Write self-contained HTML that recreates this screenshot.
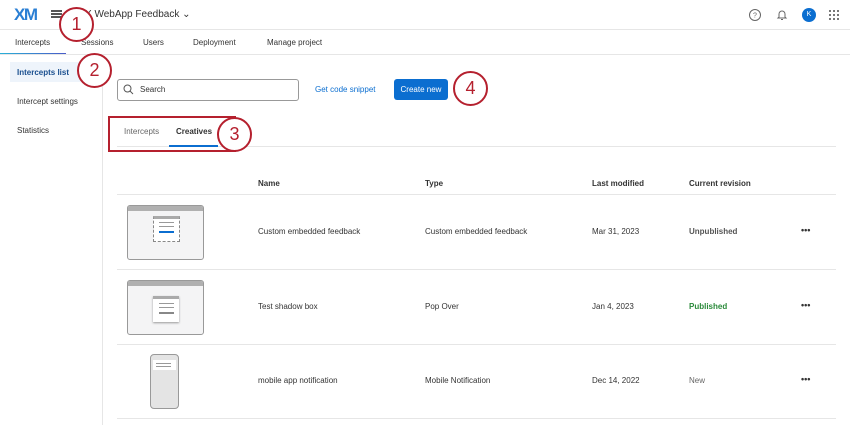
<!DOCTYPE html>
<html><head><style>
*{margin:0;padding:0;box-sizing:border-box}
body{width:850px;height:425px;overflow:hidden;background:#fff;font-family:"Liberation Sans",Arial,sans-serif;color:#333;position:relative;font-size:8px}
.a{position:absolute}
.circ{position:absolute;width:35px;height:35px;border:2.5px solid #b5202e;border-radius:50%;background:#fff;color:#b5202e;font-size:18px;text-align:center;line-height:30px}
.thumb{position:absolute;width:77px;height:55px;background:#f4f4f5;border:1px solid #999;border-radius:3px;overflow:hidden}
.thumb:before{content:"";position:absolute;left:0;top:0;right:0;height:5px;background:#b0b0b0}
.hl{position:absolute;left:117px;width:719px;height:1px;background:#e6e6e6}
.td{position:absolute;font-size:8px;color:#333}
</style></head><body>
<div class="a" style="left:14px;top:5px;font-size:17px;font-weight:bold;color:#2a7fd4;letter-spacing:-1.5px">XM</div>
<div class="a" style="left:51px;top:10px;width:11px;height:1.5px;background:#555;box-shadow:0 3px 0 #555,0 6px 0 #555"></div>
<div class="a" style="left:85px;top:9px;font-size:10px;color:#333">X WebApp Feedback ⌄</div>
<svg class="a" style="left:748px;top:8px" width="14" height="14"><circle cx="7" cy="7" r="5.5" fill="none" stroke="#666" stroke-width="1"/><text x="7" y="9.5" font-size="7" text-anchor="middle" fill="#666" font-family="Liberation Sans">?</text></svg>
<svg class="a" style="left:776px;top:8px" width="12" height="14"><path d="M2 10 L3 9 V6 A3 3 0 0 1 9 6 V9 L10 10 Z M5 11.5 H7" fill="none" stroke="#666" stroke-width="1"/></svg>
<div class="a" style="left:802px;top:8px;width:14px;height:14px;border-radius:50%;background:#0b6ed0;color:#fff;font-size:7px;text-align:center;line-height:14px">K</div>
<svg class="a" style="left:829px;top:10px" width="11" height="11" fill="#777"><rect x="0" y="0" width="2" height="2"/><rect x="4" y="0" width="2" height="2"/><rect x="8" y="0" width="2" height="2"/><rect x="0" y="4" width="2" height="2"/><rect x="4" y="4" width="2" height="2"/><rect x="8" y="4" width="2" height="2"/><rect x="0" y="8" width="2" height="2"/><rect x="4" y="8" width="2" height="2"/><rect x="8" y="8" width="2" height="2"/></svg>
<div class="a" style="left:0;top:29px;width:850px;height:1px;background:#e6e6e6"></div>
<div class="a" style="left:15px;top:38px;font-size:8px">Intercepts</div>
<div class="a" style="left:81px;top:38px;font-size:8px">Sessions</div>
<div class="a" style="left:143px;top:38px;font-size:8px">Users</div>
<div class="a" style="left:193px;top:38px;font-size:8px">Deployment</div>
<div class="a" style="left:267px;top:38px;font-size:8px">Manage project</div>
<div class="a" style="left:0;top:53px;width:66px;height:2px;background:linear-gradient(90deg,#2ab0d8,#4a5bc8)"></div>
<div class="a" style="left:0;top:54px;width:850px;height:1px;background:#e6e6e6"></div>
<div class="a" style="left:102px;top:55px;width:1px;height:370px;background:#e6e6e6"></div>
<div class="a" style="left:10px;top:62px;width:90px;height:20px;background:#eef4fb"></div>
<div class="a" style="left:17px;top:68px;font-size:8px;font-weight:bold;color:#1a4f8f">Intercepts list</div>
<div class="a" style="left:17px;top:97px;font-size:8px">Intercept settings</div>
<div class="a" style="left:17px;top:126px;font-size:8px">Statistics</div>
<div class="a" style="left:117px;top:79px;width:182px;height:22px;border:1px solid #999;border-radius:3px"></div>
<svg class="a" style="left:123px;top:84px" width="11" height="11"><circle cx="4.5" cy="4.5" r="3.5" fill="none" stroke="#555" stroke-width="1"/><path d="M7 7 L10 10" stroke="#555"/></svg>
<div class="a" style="left:140px;top:85px;font-size:8px">Search</div>
<div class="a" style="left:315px;top:85px;font-size:8px;color:#0b6ed0">Get code snippet</div>
<div class="a" style="left:394px;top:79px;width:54px;height:21px;background:#0b6ed0;border-radius:3px;color:#fff;font-size:8px;text-align:center;line-height:21px">Create new</div>
<div class="a" style="left:117px;top:146px;width:719px;height:1px;background:#e6e6e6"></div>
<div class="a" style="left:124px;top:127px;font-size:8px;color:#666">Intercepts</div>
<div class="a" style="left:176px;top:127px;font-size:8px;font-weight:bold">Creatives</div>
<div class="a" style="left:169px;top:145px;width:49px;height:1.5px;background:#0b6ed0"></div>
<div class="a" style="left:108px;top:116px;width:128px;height:36px;border:2.5px solid #b5202e"></div>
<div class="td" style="left:258px;top:179px;font-weight:bold">Name</div>
<div class="td" style="left:425px;top:179px;font-weight:bold">Type</div>
<div class="td" style="left:592px;top:179px;font-weight:bold">Last modified</div>
<div class="td" style="left:689px;top:179px;font-weight:bold">Current revision</div>
<div class="hl" style="top:194px"></div>
<div class="hl" style="top:269px"></div>
<div class="hl" style="top:344px"></div>
<div class="hl" style="top:418px"></div>
<div class="thumb" style="left:127px;top:205px"><div class="a" style="left:25px;top:10px;width:27px;height:26px;background:#fff;border:1px dashed #888;border-top:3px solid #aaa"></div><div class="a" style="left:31px;top:16px;width:15px;height:1px;background:#999;box-shadow:0 4px 0 #999"></div><div class="a" style="left:31px;top:25px;width:15px;height:2px;background:#0b6ed0"></div></div>
<div class="thumb" style="left:127px;top:280px"><div class="a" style="left:25px;top:15px;width:26px;height:26px;background:#fff;border-top:3px solid #aaa;box-shadow:0 1px 2px #999"></div><div class="a" style="left:31px;top:22px;width:15px;height:1px;background:#999;box-shadow:0 4px 0 #999"></div><div class="a" style="left:31px;top:31px;width:15px;height:2px;background:#888"></div></div>
<div class="a" style="left:150px;top:354px;width:29px;height:55px;background:#e4e4e4;border:1px solid #999;border-radius:4px"><div class="a" style="left:2px;top:5px;width:23px;height:10px;background:#fff"></div><div class="a" style="left:5px;top:8px;width:15px;height:1px;background:#999;box-shadow:0 3px 0 #999"></div></div>
<div class="td" style="left:258px;top:227px">Custom embedded feedback</div>
<div class="td" style="left:425px;top:227px">Custom embedded feedback</div>
<div class="td" style="left:592px;top:227px">Mar 31, 2023</div>
<div class="td" style="left:689px;top:227px;font-weight:bold;color:#555">Unpublished</div>
<div class="td" style="left:258px;top:302px">Test shadow box</div>
<div class="td" style="left:425px;top:302px">Pop Over</div>
<div class="td" style="left:592px;top:302px">Jan 4, 2023</div>
<div class="td" style="left:689px;top:302px;font-weight:bold;color:#2a8a3a">Published</div>
<div class="td" style="left:258px;top:376px">mobile app notification</div>
<div class="td" style="left:425px;top:376px">Mobile Notification</div>
<div class="td" style="left:592px;top:376px">Dec 14, 2022</div>
<div class="td" style="left:689px;top:376px;color:#666">New</div>
<div class="td" style="left:801px;top:225px;font-size:9px;font-weight:bold">•••</div>
<div class="td" style="left:801px;top:300px;font-size:9px;font-weight:bold">•••</div>
<div class="td" style="left:801px;top:374px;font-size:9px;font-weight:bold">•••</div>
<div class="circ" style="left:59px;top:7px">1</div>
<div class="circ" style="left:77px;top:53px">2</div>
<div class="circ" style="left:217px;top:117px">3</div>
<div class="circ" style="left:453px;top:71px">4</div>
</body></html>
